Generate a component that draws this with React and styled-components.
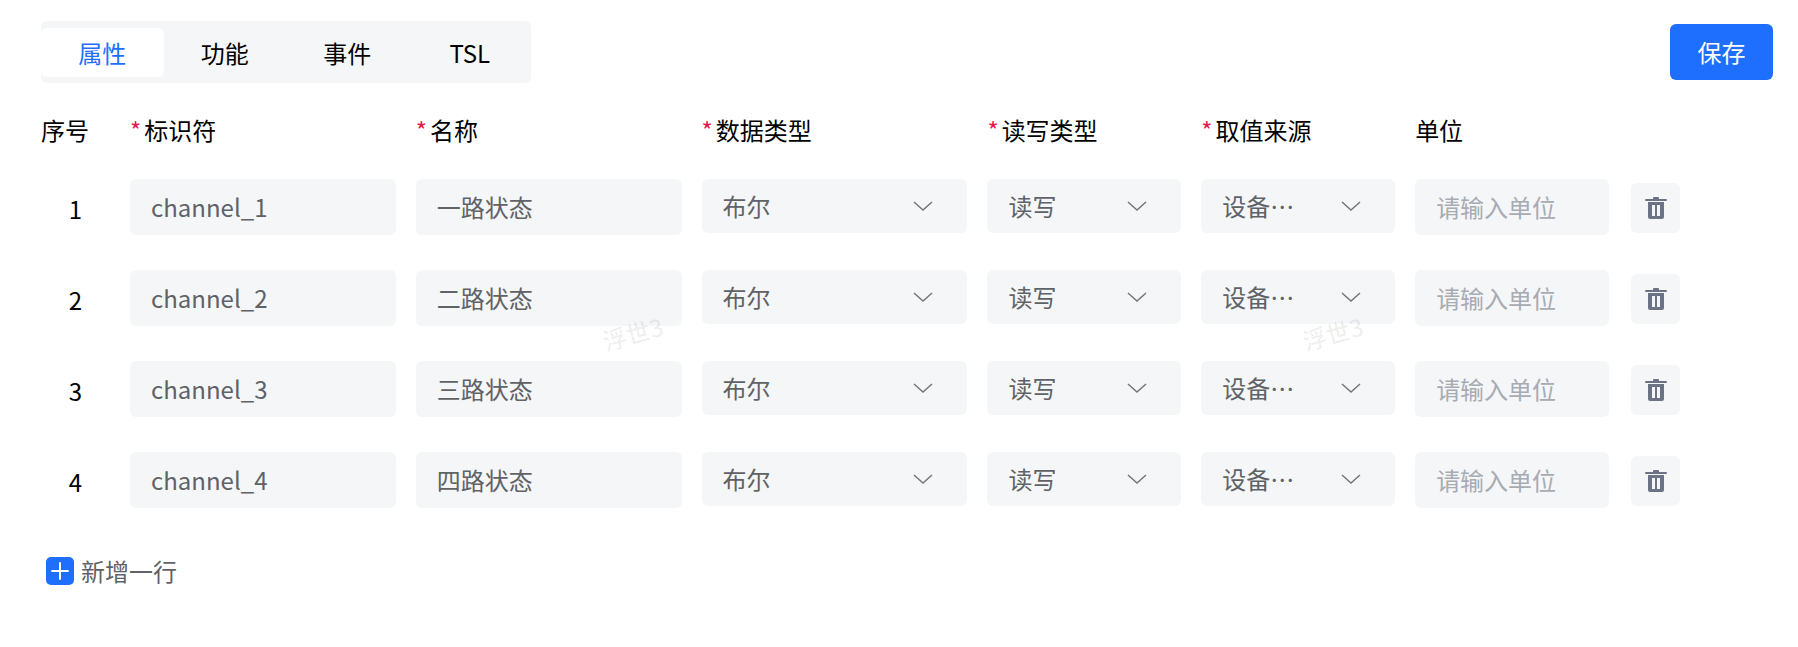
import { useState } from "react";
import styled, { createGlobalStyle } from "styled-components";

const TABS = ["属性", "功能", "事件", "TSL"];

const COLUMNS = [
  { label: "序号", required: false },
  { label: "标识符", required: true },
  { label: "名称", required: true },
  { label: "数据类型", required: true },
  { label: "读写类型", required: true },
  { label: "取值来源", required: true },
  { label: "单位", required: false },
];

const initialRows = [
  { id: 1, identifier: "channel_1", name: "一路状态", unit: "" },
  { id: 2, identifier: "channel_2", name: "二路状态", unit: "" },
  { id: 3, identifier: "channel_3", name: "三路状态", unit: "" },
  { id: 4, identifier: "channel_4", name: "四路状态", unit: "" },
];

const Select = ({ label, value }) => (
  <SelectBox>
    <select aria-label={label} defaultValue={value}>
      <option value={value}>{value}</option>
    </select>
    <svg width="20" height="10" viewBox="0 0 20 10" aria-hidden="true">
      <path d="M1 1l9 8 9-8" fill="none" stroke="#73767a" strokeWidth="1.5" />
    </svg>
  </SelectBox>
);

const TrashIcon = () => (
  <svg width="22" height="24" viewBox="0 0 22 24" aria-hidden="true">
    <path
      fill="#6b7385"
      fillRule="evenodd"
      d="M9 1h4a1 1 0 0 1 1 1v1h7a1 1 0 0 1 0 2H1a1 1 0 0 1 0-2h7V2a1 1 0 0 1 1-1zM3 6h16v15a2 2 0 0 1-2 2H5a2 2 0 0 1-2-2zM7 9v11h3V9zM12 9v11h3V9z"
    />
  </svg>
);

const App = () => {
  const [activeTab, setActiveTab] = useState("属性");
  const [rows, setRows] = useState(initialRows);

  const updateRow = (id, field, value) => {
    setRows(rows.map((row) => (row.id === id ? { ...row, [field]: value } : row)));
  };

  const removeRow = (id) => {
    setRows(rows.filter((row) => row.id !== id));
  };

  const addRow = () => {
    setRows([...rows, { id: Date.now(), identifier: "", name: "", unit: "" }]);
  };

  return (
    <Page lang="zh-CN">
      <GlobalStyle />
      <Toolbar>
        <TabList>
          {TABS.map((tab) => (
            <Tab
              key={tab}
              type="button"
              $active={tab === activeTab}
              onClick={() => setActiveTab(tab)}
            >
              {tab}
            </Tab>
          ))}
        </TabList>
        <SaveButton type="button">保存</SaveButton>
      </Toolbar>

      <Table>
        <thead>
          <HeadRow>
            {COLUMNS.map(({ label, required }) => (
              <HeadCell key={label}>
                {required && <Star>*</Star>}
                {label}
              </HeadCell>
            ))}
          </HeadRow>
        </thead>
        <tbody>
          {rows.map((row, index) => (
            <Row key={row.id}>
              <IndexCell>{index + 1}</IndexCell>
              <Cell>
                <TextInput
                  type="text"
                  aria-label="标识符"
                  value={row.identifier}
                  onChange={(e) => updateRow(row.id, "identifier", e.target.value)}
                />
              </Cell>
              <Cell>
                <TextInput
                  type="text"
                  aria-label="名称"
                  value={row.name}
                  onChange={(e) => updateRow(row.id, "name", e.target.value)}
                />
              </Cell>
              <Cell>
                <Select label="数据类型" value="布尔" />
              </Cell>
              <Cell>
                <Select label="读写类型" value="读写" />
              </Cell>
              <Cell>
                <Select label="取值来源" value="设备…" />
              </Cell>
              <Cell>
                <TextInput
                  type="text"
                  aria-label="单位"
                  placeholder="请输入单位"
                  value={row.unit}
                  onChange={(e) => updateRow(row.id, "unit", e.target.value)}
                />
              </Cell>
              <ActionCell>
                <DeleteButton
                  type="button"
                  aria-label="删除"
                  onClick={() => removeRow(row.id)}
                >
                  <TrashIcon />
                </DeleteButton>
              </ActionCell>
            </Row>
          ))}
        </tbody>
      </Table>

      <AddButton type="button" onClick={addRow}>
        <svg width="28" height="28" viewBox="0 0 28 28" aria-hidden="true">
          <rect width="28" height="28" rx="5" fill="#1f6fff" />
          <path d="M14 6v16M6 14h16" stroke="#fff" strokeWidth="2" strokeLinecap="round" />
        </svg>
        新增一行
      </AddButton>

      <Watermark aria-hidden="true">
        <span>浮世3</span>
        <span>浮世3</span>
      </Watermark>
    </Page>
  );
};

const GlobalStyle = createGlobalStyle`
  * {
    box-sizing: border-box;
  }

  body {
    margin: 0;
    background-color: #fff;
  }

  body, button, input, select {
    font-family: "Noto Sans CJK SC", sans-serif;
    font-size: 24px;
    line-height: 36px;
  }

  button {
    padding: 0;
    border: none;
    cursor: pointer;
  }
`;

const Page = styled.main`
  position: relative;
  min-height: 100vh;
  padding: 21px 25px 40px 41px;
  overflow: hidden;
  color: #000;
`;

const Toolbar = styled.div`
  display: flex;
  justify-content: space-between;
  align-items: center;
`;

const TabList = styled.div`
  display: flex;
  width: 490px;
  padding: 7px 0 6px;
  border-radius: 6px;
  background-color: #f4f6f8;
`;

const Tab = styled.button`
  flex: 1;
  height: 49px;
  border-radius: 6px;
  color: ${({ $active }) => ($active ? "#1f6fff" : "#000")};
  background-color: ${({ $active }) => ($active ? "#fff" : "transparent")};
`;

const SaveButton = styled.button`
  width: 103px;
  height: 56px;
  padding-bottom: 1px;
  border-radius: 6px;
  color: #fff;
  background-color: #1f6fff;
`;

const Table = styled.table`
  display: block;
  margin-top: 29px;

  thead,
  tbody {
    display: block;
  }
`;

const Row = styled.tr`
  display: grid;
  grid-template-columns: 69px repeat(3, minmax(0, 266fr)) repeat(3, minmax(0, 194fr)) 51px;
  column-gap: 20px;
  align-items: start;
  height: 56px;
  margin-bottom: 35px;
  padding-right: 93px;
`;

const HeadRow = styled(Row)`
  height: 36px;
  margin-bottom: 31px;
`;

const HeadCell = styled.th`
  padding: 0;
  font-weight: 400;
  text-align: left;
  white-space: nowrap;
`;

const Star = styled.span`
  margin-right: 3px;
  color: #e8174b;
`;

const Cell = styled.td`
  padding: 0;
`;

const IndexCell = styled(Cell)`
  padding-top: 12px;
  text-align: center;
`;

const ActionCell = styled(Cell)`
  padding: 4px 0 0 2px;
`;

const TextInput = styled.input`
  display: block;
  width: 100%;
  height: 56px;
  padding: 0 21px 2px;
  border: none;
  border-radius: 6px;
  outline: none;
  color: #606266;
  background-color: #f4f6f8;

  &::placeholder {
    color: #a8abb2;
    opacity: 1;
  }
`;

const SelectBox = styled.div`
  position: relative;

  select {
    display: block;
    width: 100%;
    height: 54px;
    padding: 0 60px 0 21px;
    border: none;
    border-radius: 6px;
    outline: none;
    appearance: none;
    color: #606266;
    background-color: #f4f6f8;
  }

  svg {
    position: absolute;
    top: 22px;
    right: 34px;
    pointer-events: none;
  }
`;

const DeleteButton = styled.button`
  display: flex;
  justify-content: center;
  align-items: center;
  width: 49px;
  height: 50px;
  border-radius: 6px;
  background-color: #f4f6f8;
`;

const AddButton = styled.button`
  display: flex;
  align-items: center;
  gap: 7px;
  margin: 45px 0 0 5px;
  color: #606266;
  background-color: transparent;
`;

const Watermark = styled.div`
  position: absolute;
  top: 315px;
  left: 602px;
  display: flex;
  gap: 636px;
  font-weight: 500;
  color: rgba(0, 0, 0, 0.07);
  pointer-events: none;

  span {
    width: 64px;
    white-space: nowrap;
    transform: rotate(-15deg);
  }
`;

export default App;
